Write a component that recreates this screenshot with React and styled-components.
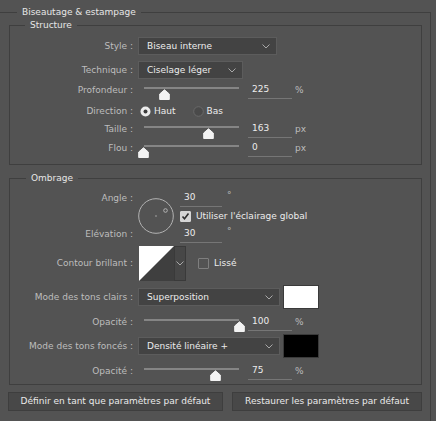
import React from 'react';
import styled, { createGlobalStyle } from 'styled-components';

const GlobalStyle = createGlobalStyle`
  body {
    margin: 0;
    background: #535353;
    font-family: 'DejaVu Sans', sans-serif;
    font-size: 9px;
    color: #e2e2e2;
    overflow: hidden;
  }
`;

const Page = styled.div`
  padding-top: 6px;
`;

const Group = styled.fieldset`
  box-sizing: border-box;
  margin: ${props => props.$margin || '0'};
  padding: ${props => props.$pad};
  border: 1px solid #3f3f3f;
  border-left: ${props => props.$noLeft ? '0' : '1px solid #3f3f3f'};
  width: ${props => props.$width || 'auto'};
  min-width: 0;
`;

const Legend = styled.legend`
  margin-left: ${props => props.$ml}px;
  padding: 0 5px;
  line-height: 12px;
  color: #e6e6e6;
`;

const Row = styled.div`
  display: flex;
  align-items: center;
  height: ${props => props.$h}px;
  margin-top: ${props => props.$mt || 0}px;
`;

const Label = styled.div`
  flex-shrink: 0;
  width: 123px;
  margin-right: 5px;
  text-align: right;
  color: #bdbdbd;
  white-space: nowrap;
`;

const Select = styled.div`
  box-sizing: border-box;
  display: flex;
  align-items: center;
  justify-content: space-between;
  width: ${props => props.$w}px;
  height: 18px;
  padding: 0 6px 0 8px;
  background: #434343;
  border: 1px solid #5c5c5c;
  color: #ececec;
  white-space: nowrap;
`;

const SliderBox = styled.div`
  position: relative;
  flex-shrink: 0;
  width: 101px;
  height: 18px;
  margin-right: 9px;
`;

const Track = styled.div`
  width: 95px;
  height: 2px;
  margin: 6px 0 0 6px;
  background: #858585;
`;

const ThumbMark = styled.svg`
  position: absolute;
  top: 8px;
  width: 11px;
  height: 11px;
`;

const NumField = styled.div`
  box-sizing: border-box;
  flex-shrink: 0;
  width: ${props => props.$w || 44}px;
  height: 18px;
  padding-left: 4px;
  line-height: 17px;
  border-bottom: 1px solid #767676;
  color: #ececec;
`;

const Unit = styled.span`
  margin-left: ${props => props.$ml || 3}px;
  color: #bdbdbd;
  align-self: ${props => props.$top ? 'flex-start' : 'center'};
  line-height: ${props => props.$top ? '12px' : 'normal'};
`;

const Option = styled.div`
  display: flex;
  align-items: center;
  gap: 3px;
  margin-left: ${props => props.$ml || 0}px;
  color: #ececec;
`;

const Check = styled.div`
  box-sizing: border-box;
  display: flex;
  align-items: center;
  justify-content: center;
  width: 11px;
  height: 11px;
  border-radius: 1px;
  background: ${props => props.$on ? '#d6d6d6' : 'transparent'};
  border: 1px solid ${props => props.$on ? '#d6d6d6' : '#7f7f7f'};
`;

const CheckOption = styled(Option)`
  gap: 5px;
`;

const AngleBlock = styled.div`
  display: flex;
  height: 54px;
  margin-top: 1px;
`;

const LabelCol = styled.div`
  display: flex;
  flex-direction: column;
  justify-content: space-between;
  flex-shrink: 0;
  width: 123px;
  margin-right: 5px;
  text-align: right;
  color: #bdbdbd;
  line-height: 18px;
`;

const Dial = styled.svg`
  width: 36px;
  height: 36px;
  margin-top: 9px;
  flex-shrink: 0;
`;

const FieldCol = styled.div`
  display: flex;
  flex-direction: column;
  margin-left: 6px;
`;

const ContourBox = styled.div`
  display: flex;
  height: 35px;
  margin-left: 1px;
`;

const ContourArrow = styled.div`
  box-sizing: border-box;
  display: flex;
  align-items: center;
  justify-content: center;
  width: 12px;
  background: #474747;
  border: 1px solid #3a3a3a;
`;

const Swatch = styled.div`
  box-sizing: border-box;
  width: 36px;
  height: 24px;
  margin-left: 3px;
  background: ${props => props.$color};
  border: 1px solid #3a3a3a;
`;

const ButtonRow = styled.div`
  display: flex;
  gap: 9px;
  margin: 7px 0 0 -1px;
`;

const Button = styled.div`
  box-sizing: border-box;
  width: ${props => props.$w}px;
  height: 19px;
  line-height: 17px;
  text-align: center;
  background: #484848;
  border: 1px solid #3e3e3e;
  color: #eaeaea;
  white-space: nowrap;
`;

function Chevron() {
  return (
    <svg width="8" height="5" viewBox="0 0 8 5">
      <polyline points="0.5,0.5 4,4 7.5,0.5" fill="none" stroke="#a8a8a8" strokeWidth="1" />
    </svg>
  );
}

function Slider({ pct }) {
  return (
    <SliderBox>
      <Track />
      <ThumbMark viewBox="0 0 11 11" style={{ left: 5 + pct * 96 - 5.5 }}>
        <path d="M5.5 0.8 L10.3 5 L10.3 10.5 L0.7 10.5 L0.7 5 Z" fill="#f2f2f2" stroke="#f2f2f2" strokeLinejoin="round" />
      </ThumbMark>
    </SliderBox>
  );
}

function Radio({ on }) {
  return (
    <svg width="11" height="11" viewBox="0 0 11 11">
      {on ? (
        <>
          <circle cx="5.5" cy="5.5" r="5" fill="#ececec" />
          <circle cx="5.5" cy="5.5" r="2" fill="#3c3c3c" />
        </>
      ) : (
        <circle cx="5.5" cy="5.5" r="4.8" fill="#4a4a4a" stroke="#6a6a6a" />
      )}
    </svg>
  );
}

function CheckBox({ on, children }) {
  return (
    <CheckOption $ml={on ? 0 : 12}>
      <Check $on={on}>
        {on && (
          <svg width="9" height="9" viewBox="0 0 9 9">
            <polyline points="1.5,4.5 3.5,6.8 7.5,1.5" fill="none" stroke="#2e2e2e" strokeWidth="1.6" />
          </svg>
        )}
      </Check>
      {children}
    </CheckOption>
  );
}

function SliderRow({ label, pct, value, unit, mt }) {
  return (
    <Row $h={18} $mt={mt}>
      <Label>{label}</Label>
      <Slider pct={pct} />
      <NumField>{value}</NumField>
      <Unit>{unit}</Unit>
    </Row>
  );
}

export default function App() {
  return (
    <Page>
      <GlobalStyle />
      <Group $noLeft $width="431px" $pad="1px 8px 12px 9px">
        <Legend $ml={8}>Biseautage &amp; estampage</Legend>

        <Group $pad="6px 0 7px 0">
          <Legend $ml={15}>Structure</Legend>
          <Row $h={18}>
            <Label>Style :</Label>
            <Select $w={139}>Biseau interne<Chevron /></Select>
          </Row>
          <Row $h={18} $mt={6}>
            <Label>Technique :</Label>
            <Select $w={105}>Ciselage léger<Chevron /></Select>
          </Row>
          <SliderRow label="Profondeur :" pct={0.225} value="225" unit="%" mt={2} />
          <Row $h={18} $mt={3}>
            <Label>Direction :</Label>
            <Option $ml={2}><Radio on />Haut</Option>
            <Option $ml={17}><Radio />Bas</Option>
          </Row>
          <SliderRow label="Taille :" pct={0.68} value="163" unit="px" mt={0} />
          <SliderRow label="Flou :" pct={0} value="0" unit="px" mt={1} />
        </Group>

        <Group $margin="7px 0 0 0" $pad="4px 0 4px 0">
          <Legend $ml={16}>Ombrage</Legend>
          <AngleBlock>
            <LabelCol>
              <div>Angle :</div>
              <div>Elévation :</div>
            </LabelCol>
            <Dial viewBox="0 0 36 36">
              <circle cx="18" cy="18" r="17.3" fill="none" stroke="#b3b3b3" strokeWidth="1" />
              <circle cx="18" cy="18" r="0.7" fill="#c0c0c0" />
              <circle cx="27.5" cy="12.5" r="1.8" fill="none" stroke="#b3b3b3" strokeWidth="1" />
            </Dial>
            <FieldCol>
              <Row $h={18}>
                <NumField $w={42}>30</NumField>
                <Unit $ml={5} $top>°</Unit>
              </Row>
              <Row $h={18}>
                <CheckBox on>Utiliser l'éclairage global</CheckBox>
              </Row>
              <Row $h={18}>
                <NumField $w={42}>30</NumField>
                <Unit $ml={5} $top>°</Unit>
              </Row>
            </FieldCol>
          </AngleBlock>
          <Row $h={36} $mt={2}>
            <Label>Contour brillant :</Label>
            <ContourBox>
              <svg width="35" height="35" viewBox="0 0 35 35">
                <rect width="35" height="35" fill="#3f3f3f" />
                <polygon points="0,0 35,0 0,35" fill="#ffffff" />
              </svg>
              <ContourArrow><Chevron /></ContourArrow>
            </ContourBox>
            <CheckBox>Lissé</CheckBox>
          </Row>
          <Row $h={24} $mt={4}>
            <Label>Mode des tons clairs :</Label>
            <Select $w={142}>Superposition<Chevron /></Select>
            <Swatch $color="#ffffff" />
          </Row>
          <SliderRow label="Opacité :" pct={1} value="100" unit="%" mt={4} />
          <Row $h={24} $mt={3}>
            <Label>Mode des tons foncés :</Label>
            <Select $w={142}>Densité linéaire +<Chevron /></Select>
            <Swatch $color="#000000" />
          </Row>
          <SliderRow label="Opacité :" pct={0.75} value="75" unit="%" mt={4} />
        </Group>

        <ButtonRow>
          <Button $w={215}>Définir en tant que paramètres par défaut</Button>
          <Button $w={190}>Restaurer les paramètres par défaut</Button>
        </ButtonRow>
      </Group>
    </Page>
  );
}
